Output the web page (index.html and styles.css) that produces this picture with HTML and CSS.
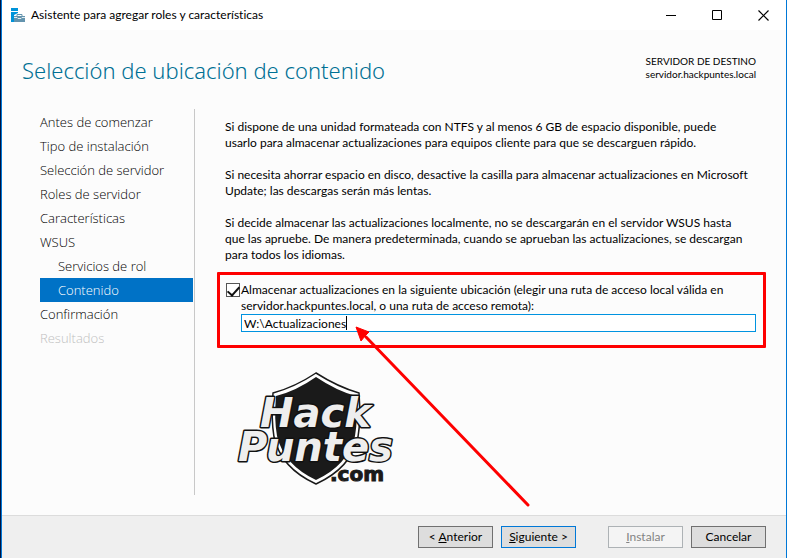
FILE: index.html
```html
<!DOCTYPE html>
<html lang="es">
<head>
<meta charset="utf-8">
<title>Asistente para agregar roles y características</title>
<link rel="stylesheet" href="styles.css">
</head>
<body>
<div class="window">
  <header class="titlebar">
    <svg class="app-icon" width="15" height="15" viewBox="0 0 15 15" aria-hidden="true">
      <path d="M0 0h7v3H0zM0 4h7v1L3 7v7H0z" fill="#0093d9"/>
      <path d="M3 8h11v6H3z" fill="#6494ae"/>
      <path d="M6 8V6.500h5V8" fill="none" stroke="#6494ae"/>
      <path d="M3 9.500h3l1 1h3l1-1h3" fill="none" stroke="#fff" stroke-width=".8"/>
    </svg>
    <span class="caption">Asistente para agregar roles y características</span>
    <div class="controls">
      <button type="button" aria-label="Minimizar"><svg width="11" height="11" viewBox="0 0 11 11"><path d="M0 5.500h10" stroke="#000"/></svg></button>
      <button type="button" aria-label="Maximizar"><svg width="11" height="11" viewBox="0 0 11 11"><path d="M.5.500h9v9h-9z" fill="none" stroke="#000"/></svg></button>
      <button type="button" aria-label="Cerrar"><svg width="11" height="11" viewBox="0 0 11 11"><path d="M.5.500l10 10m0-10l-10 10" stroke="#000" stroke-width="1.200"/></svg></button>
    </div>
  </header>
  <div class="heading">
    <h1>Selección de ubicación de contenido</h1>
    <p class="target">SERVIDOR DE DESTINO<br>servidor.hackpuntes.local</p>
  </div>
  <div class="body">
    <nav class="steps">
      <ul>
        <li>Antes de comenzar</li>
        <li>Tipo de instalación</li>
        <li>Selección de servidor</li>
        <li>Roles de servidor</li>
        <li>Características</li>
        <li>WSUS</li>
        <li class="sub">Servicios de rol</li>
        <li class="sub current" aria-current="step">Contenido</li>
        <li>Confirmación</li>
        <li class="off">Resultados</li>
      </ul>
    </nav>
    <main class="content">
      <p>Si dispone de una unidad formateada con NTFS y al menos 6 GB de espacio disponible, puede<br>usarlo para almacenar actualizaciones para equipos cliente para que se descarguen rápido.</p>
      <p>Si necesita ahorrar espacio en disco, desactive la casilla para almacenar actualizaciones en Microsoft<br>Update; las descargas serán más lentas.</p>
      <p>Si decide almacenar las actualizaciones localmente, no se descargarán en el servidor WSUS hasta<br>que las apruebe. De manera predeterminada, cuando se aprueban las actualizaciones, se descargan<br>para todos los idiomas.</p>
      <div class="highlight">
        <input class="check" type="checkbox" id="store" checked>
        <div class="field">
          <label for="store">Almacenar actualizaciones en la siguiente ubicación (elegir una ruta de acceso local válida en<br>servidor.hackpuntes.local, o una ruta de acceso remota):</label>
          <div class="path-box">
            <input class="path" type="text" aria-label="Ruta de acceso" value="W:\Actualizaciones">
            <span class="caret"></span>
          </div>
        </div>
        <svg class="arrow" width="180" height="186" viewBox="0 0 180 186" aria-hidden="true">
          <path d="M10 10L172 178" stroke="#fe0000" stroke-width="3" stroke-linecap="round"/>
          <path d="M0 0L13 5L9 9L5 14z" fill="#fe0000" stroke="#fe0000"/>
        </svg>
      </div>
      <svg class="logo" width="160" height="116" viewBox="0 0 160 116" role="img" aria-label="Hack Puntes .com">
        <path d="M78 2Q100 16 121 22Q123 48 120 66Q113 97 78 113Q43 97 36 66Q33 48 35 22Q57 16 78 2z" fill="#fff" stroke="#1a1a1a" stroke-width="1.500"/>
        <path d="M78 6Q99 20 118 25Q120 48 117 65Q110 94 78 109Q46 94 39 65Q36 48 38 25Q58 20 78 6z" fill="#1a1a1a"/>
        <g class="logo-word">
          <text x="22" y="56" font-size="40">Hack</text>
          <text x="0" y="90" font-size="40">Puntes</text>
        </g>
        <text class="logo-com" x="92" y="110" font-size="20">.com</text>
      </svg>
    </main>
  </div>
  <footer class="actions">
    <button type="button">&lt; <u>A</u>nterior</button>
    <button type="button" class="default"><u>S</u>iguiente &gt;</button>
    <button type="button" class="install" disabled><u>I</u>nstalar</button>
    <button type="button">Cancelar</button>
  </footer>
</div>
</body>
</html>
```
FILE: styles.css
```css
* { box-sizing: border-box; }
body {
  margin: 0;
  font: 12px/16px Lato, "Noto Sans", sans-serif;
  font-variant-ligatures: none;
  color: #000;
  background: #00133f;
}
p, h1, ul { margin: 0; padding: 0; }
.window {
  display: flex;
  flex-direction: column;
  min-height: 100vh;
  margin-left: 1px;
  border: solid #0078d7;
  border-width: 0 1px;
  background: #fcfcfc;
}
.titlebar {
  display: flex;
  align-items: center;
  height: 30px;
  padding-left: 9px;
  background: #fff;
}
.app-icon { margin-right: 5px; }
.controls { display: flex; margin-left: auto; }
.controls button {
  display: flex;
  align-items: center;
  justify-content: center;
  width: 46px;
  height: 30px;
  padding: 0;
  border: 0;
  background: none;
}
.heading {
  display: flex;
  justify-content: space-between;
  height: 79px;
  padding: 24px 30px 0 20px;
}
h1 {
  font: 300 22px/32px "Noto Sans", "Open Sans", sans-serif;
  color: #007094;
}
.target { padding-top: 1px; font-size: 10px; line-height: 13px; text-align: right; }
.body { display: flex; flex: 1; padding-bottom: 20px; }
.steps {
  flex: 0 0 193px;
  padding: 1px 1px 0 38px;
  border-right: 1px solid #c8c8c8;
}
.steps ul { list-style: none; }
.steps li {
  height: 24px;
  font: 300 13px/24px "Open Sans", "Noto Sans", sans-serif;
  color: #000;
}
.steps .sub { padding-left: 18px; }
.steps .current { background: #0072c6; color: #fff; }
.steps .off { color: #c0c0c0; }
.content { flex: 1; min-width: 0; padding: 10px 20px 0 22px; }
.content p { margin: 0 0 16px 8px; white-space: nowrap; }
.highlight {
  position: relative;
  display: flex;
  gap: 1px;
  margin-top: -7px;
  padding: 7px 7px 13px 6px;
  border: 3px solid #fe0000;
  border-radius: 1px;
}
.check {
  appearance: none;
  flex: none;
  display: flex;
  justify-content: center;
  width: 14px;
  height: 14px;
  margin: 1px 0 0;
  border: 1px solid #555;
  background: #fff;
}
.check:checked::before {
  content: "";
  width: 5px;
  height: 10px;
  border: solid #111;
  border-width: 0 2px 2px 0;
  transform: rotate(42deg);
}
.field { flex: 1; min-width: 0; }
.field label { display: block; white-space: nowrap; }
.path-box { position: relative; }
.path {
  display: block;
  width: 100%;
  height: 18px;
  padding: 0 2px;
  border: 1px solid #0093e0;
  background: #fff;
  color: #000;
  font: inherit;
}
.caret { position: absolute; left: 105px; top: 2px; width: 1px; height: 14px; background: #000; }
.arrow { position: absolute; left: 136px; top: 52px; overflow: visible; }
.logo { display: block; margin: 23px 0 0 21px; overflow: visible; }
.logo-word text {
  font-family: "DejaVu Sans", sans-serif;
  font-weight: 700;
  font-style: italic;
  fill: #eee;
  stroke: #111;
  stroke-width: 3px;
  paint-order: stroke;
  stroke-linejoin: round;
}
.logo-com {
  font-family: "DejaVu Sans", sans-serif;
  font-weight: 700;
  fill: #1a1a1a;
  stroke: #1a1a1a;
}
.actions {
  display: flex;
  justify-content: flex-end;
  gap: 8px;
  height: 43px;
  padding: 10px 20px 0;
  border-top: 1px solid #dcdcdc;
  background: #efefef;
}
.actions button {
  width: 75px;
  height: 22px;
  padding: 0;
  border: 1px solid #707070;
  background: #ddd;
  color: #000;
  font: inherit;
}
.actions .default { border-color: #0078d7; }
.actions .install { margin-left: 24px; border-color: #adb2b5; background: #f4f4f4; color: #838383; }
```
